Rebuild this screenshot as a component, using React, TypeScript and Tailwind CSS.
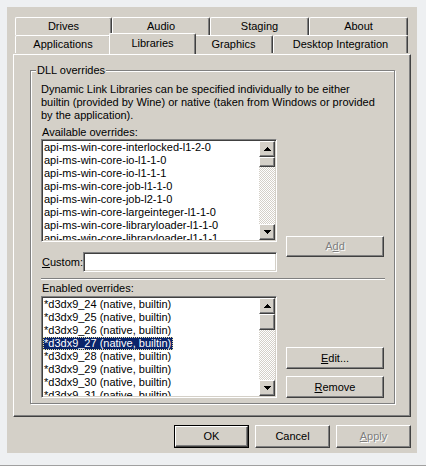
import React from "react";

const raised =
  "border border-t-white border-l-white border-r-[#404040] border-b-[#404040] shadow-[inset_-1px_-1px_#808080] bg-[#d4d0c8]";
const sunken =
  "border border-t-[#808080] border-l-[#808080] border-r-white border-b-white shadow-[inset_1px_1px_#404040,inset_-1px_-1px_#d4d0c8] p-px bg-white";

function Arrow({ down }: { down?: boolean }) {
  return (
    <svg width="7" height="4" viewBox="0 0 7 4" shapeRendering="crispEdges" className={down ? "rotate-180" : ""}>
      <path d="M3 0h1v1h1v1h1v1h1v1H0V3h1V2h1V1h1z" fill="#000" />
    </svg>
  );
}

function ScrollBar({ thumb }: { thumb: string }) {
  return (
    <div className="flex h-full w-[16px] shrink-0 flex-col">
      <div className={`${raised} flex h-[16px] items-center justify-center`}>
        <Arrow />
      </div>
      <div className={`${raised} ${thumb}`} />
      <div className="flex-1 bg-[repeating-conic-gradient(#ffffff_0_25%,#d4d0c8_0_50%)] bg-[length:2px_2px]" />
      <div className={`${raised} flex h-[16px] items-center justify-center`}>
        <Arrow down />
      </div>
    </div>
  );
}

function ListBox({ items, height, thumb, selected }: { items: string[]; height: string; thumb: string; selected?: number }) {
  return (
    <div className={`${sunken} ${height} w-[236px]`}>
      <div className="flex h-full">
        <div className="flex-1 overflow-hidden">
          {items.map((it, i) => (
            <div key={i} className="h-[13px] whitespace-nowrap leading-[13px]">
              {i === selected ? (
                <span className="inline-block h-[13px] border border-dotted border-[#e8e0a0] bg-[#0a246a] pr-px leading-[11px] text-white">
                  {it}
                </span>
              ) : (
                <span className="pl-px">{it}</span>
              )}
            </div>
          ))}
        </div>
        <ScrollBar thumb={thumb} />
      </div>
    </div>
  );
}

function Button({ children, className, disabled, def }: { children: React.ReactNode; className: string; disabled?: boolean; def?: boolean }) {
  const inner = (
    <div
      className={`${raised} flex h-full w-full items-center justify-center ${
        disabled ? "text-[#808080] [text-shadow:1px_1px_0_#fff]" : "text-black"
      }`}
    >
      {children}
    </div>
  );
  if (def) return <div className={`${className} border border-black`}>{inner}</div>;
  return <div className={className}>{inner}</div>;
}

const tab = "flex h-[18px] items-center justify-center rounded-t-[2px] border-l border-t border-r border-l-white border-t-white border-r-[#404040] shadow-[inset_-1px_0_#808080]";

const available = [
  "api-ms-win-core-interlocked-l1-2-0",
  "api-ms-win-core-io-l1-1-0",
  "api-ms-win-core-io-l1-1-1",
  "api-ms-win-core-job-l1-1-0",
  "api-ms-win-core-job-l2-1-0",
  "api-ms-win-core-largeinteger-l1-1-0",
  "api-ms-win-core-libraryloader-l1-1-0",
  "api-ms-win-core-libraryloader-l1-1-1",
];

const enabled = [24, 25, 26, 27, 28, 29, 30, 31].map((n) => `*d3dx9_${n} (native, builtin)`);

export default function App() {
  return (
    <div className="h-[466px] w-[426px] border-b border-b-[#a0a0a0] bg-[#eef0f2] p-[7px] font-['Liberation_Sans',Arial,sans-serif] text-[11px] text-black">
      <div className="flex h-[446px] w-[410px] flex-col bg-[#d4d0c8] px-[6px] pt-[10px]">
        {/* tab strip */}
        <div className="pl-[2px]">
          <div className="flex">
            <div className={`${tab} w-[97px]`}>Drives</div>
            <div className={`${tab} w-[98px]`}>Audio</div>
            <div className={`${tab} w-[99px]`}>Staging</div>
            <div className={`${tab} w-[99px]`}>About</div>
          </div>
          <div className="flex items-start">
            <div className={`${tab} w-[96px]`}>Applications</div>
            <div className="relative z-10 -mx-[2px] -mt-[2px] flex h-[21px] w-[87px] items-center justify-center rounded-t-[2px] border-l border-t border-r border-l-white border-t-white border-r-[#404040] bg-[#d4d0c8] pb-[2px] shadow-[inset_-1px_0_#808080]">
              Libraries
            </div>
            <div className={`${tab} w-[79px]`}>Graphics</div>
            <div className={`${tab} w-[135px]`}>Desktop Integration</div>
          </div>
        </div>

        {/* panel */}
        <div className="h-[363px] w-[398px] border border-t-white border-l-white border-r-[#404040] border-b-[#404040] pl-[16px] pt-[15px] shadow-[inset_-1px_-1px_#808080]">
          <div className="relative h-[334px] w-[365px] border border-[#808080] pl-[10px] pt-[12px] shadow-[1px_1px_0_#fff,inset_1px_1px_0_#fff]">
            <span className="absolute -top-[7px] left-[5px] bg-[#d4d0c8] px-px leading-[13px]">DLL overrides</span>
            <p className="leading-[13px] whitespace-nowrap">
              Dynamic Link Libraries can be specified individually to be either
              <br />
              builtin (provided by Wine) or native (taken from Windows or provided
              <br />
              by the application).
            </p>
            <div className="mt-[4px] pl-px leading-[13px]">Available overrides:</div>
            <div className="flex gap-[9px]">
              <div className="flex flex-col">
                <ListBox items={available} height="h-[103px]" thumb="h-[10px]" />
                <div className="mt-[10px] flex items-center">
                  <span className="w-[42px] pl-px">
                    <span className="underline underline-offset-[1px]">C</span>ustom:
                  </span>
                  <div className={`${sunken} h-[20px] w-[194px]`} />
                </div>
              </div>
              <div className="pt-[97px]">
                <Button className="h-[21px] w-[98px]" disabled>
                  <span>
                    A<span className="underline underline-offset-[1px]">d</span>d
                  </span>
                </Button>
              </div>
            </div>
            <div className="mt-[6px] h-[2px] w-[344px] border-t border-b border-t-[#808080] border-b-white" />
            <div className="mt-[2px] pl-px leading-[13px]">Enabled overrides:</div>
            <div className="mt-px flex gap-[9px]">
              <ListBox items={enabled} height="h-[102px]" thumb="h-[16px]" selected={3} />
              <div className="flex flex-col gap-[7px] pt-[51px]">
                <Button className="h-[22px] w-[98px]">
                  <span>
                    <span className="underline underline-offset-[1px]">E</span>dit...
                  </span>
                </Button>
                <Button className="h-[22px] w-[98px]">
                  <span>
                    <span className="underline underline-offset-[1px]">R</span>emove
                  </span>
                </Button>
              </div>
            </div>
          </div>
        </div>

        {/* dialog buttons */}
        <div className="mt-[8px] flex justify-end gap-[6px]">
          <Button className="h-[23px] w-[75px]" def>
            OK
          </Button>
          <Button className="h-[23px] w-[75px]">Cancel</Button>
          <Button className="h-[23px] w-[75px]" disabled>
            <span>
              <span className="underline underline-offset-[1px]">A</span>pply
            </span>
          </Button>
        </div>
      </div>
    </div>
  );
}
